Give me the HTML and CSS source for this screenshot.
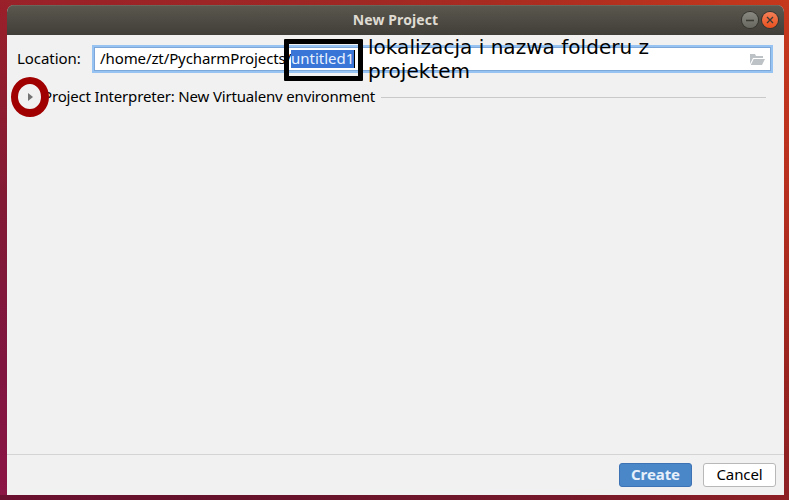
FILE: index.html
```html
<!DOCTYPE html>
<html lang="en">
<head>
<meta charset="utf-8">
<title>New Project</title>
<link rel="stylesheet" href="styles.css">
</head>
<body>
<main class="window">
  <header class="titlebar">
    <h1 class="title">New Project</h1>
    <div class="controls">
      <button class="control" aria-label="Minimize"><svg viewBox="0 0 16 16"><path d="M4 8.5h8" /></svg></button>
      <button class="control close" aria-label="Close"><svg viewBox="0 0 16 16"><path d="M5 5l6 6M11 5l-6 6" /></svg></button>
    </div>
  </header>
  <section class="content">
    <div class="location">
      <span class="label">Location:</span>
      <div class="field">
        <span class="path">/home/zt/PycharmProjects/</span><span class="selected">untitled1</span>
        <svg class="folder" viewBox="0 0 15 11"><path d="M0 0h5l1 2h7v2H3L0 10z" /><path d="M3.7 5H15l-3 6H.8z" /></svg>
      </div>
    </div>
    <div class="interpreter">
      <svg class="arrow" viewBox="0 0 5 8"><path d="M0 0l5 4-5 4z" /></svg>
      <span class="heading">Project Interpreter: New Virtualenv environment</span>
      <span class="rule"></span>
    </div>
  </section>
  <footer class="footer">
    <button class="button primary">Create</button>
    <button class="button">Cancel</button>
  </footer>
</main>
<div class="mark-box"></div>
<div class="mark-ring"></div>
<p class="note">lokalizacja i nazwa folderu z<br>projektem</p>
</body>
</html>
```
FILE: styles.css
```css
* { box-sizing: border-box; }
body {
  margin: 0;
  width: 789px;
  height: 500px;
  overflow: hidden;
  padding: 5px 5px 5px 7px;
  font: 15px/20px "Noto Sans", "Open Sans", sans-serif;
  color: #000;
  background:
    linear-gradient(90deg, #6b1030, #65122b 30%, #75182a 70%, #8d2025) 0 100% / 100% 5px no-repeat,
    linear-gradient(#9a202a, #821a35 40%, #801540 75%, #8c1545) 0 0 / 7px 100% no-repeat,
    linear-gradient(#c5391d, #b9301e 35%, #98231f 75%, #8b2025) 100% 0 / 5px 100% no-repeat,
    linear-gradient(90deg, #992129, #9f2824 45%, #ad2d20 70%, #c6381c);
}
.window {
  width: 777px;
  height: 490px;
  display: flex;
  flex-direction: column;
  background: #f1f1f1;
  border-radius: 7px 7px 0 0;
  overflow: hidden;
}
.titlebar {
  height: 30px;
  display: grid;
  grid-template-columns: 44px 1fr 44px;
  align-items: center;
  background: linear-gradient(#5b584f, #403e38);
  box-shadow: inset 0 1px #69665c;
}
.title {
  grid-column: 2;
  margin: 0;
  text-align: center;
  font-size: 14px;
  font-weight: 700;
  line-height: 20px;
  letter-spacing: .1px;
  color: #dfdbd2;
}
.controls { display: flex; gap: 4px; margin-left: 2px; }
.control {
  width: 16px;
  height: 16px;
  padding: 0;
  border: 0;
  border-radius: 50%;
  background: linear-gradient(#8a8981, #68675f);
  box-shadow: 0 0 0 1px #35342f;
}
.control.close { background: linear-gradient(#f58057, #e9501e); }
.control svg { display: block; width: 16px; height: 16px; fill: none; stroke: #3b3933; stroke-width: 1.3; }
.content { flex: 1; padding: 10px 11px 0 10px; }
.location { display: flex; align-items: center; height: 28px; }
.label { width: 75px; padding-bottom: 2px; letter-spacing: -.05px; white-space: nowrap; }
.field {
  flex: 1;
  height: 28px;
  display: flex;
  align-items: center;
  padding: 0 6px 0 5px;
  background: #fff;
  border: 2px solid #97c3f3;
  box-shadow: inset 0 0 0 1px #7ca7d8;
}
.path { width: 192px; padding: 0 0 2px 1px; letter-spacing: -.1px; white-space: nowrap; }
.selected {
  width: 64px;
  height: 18px;
  line-height: 16px;
  background: #3875d6;
  color: #e9f1ff;
  border-right: 1px solid #000;
  white-space: nowrap;
}
.folder { width: 15px; height: 11px; margin-left: auto; fill: #bdc2c6; }
.interpreter { display: flex; align-items: center; height: 20px; margin-top: 14px; padding: 0 7px 0 11px; }
.arrow { width: 5px; height: 8px; fill: #737373; }
.heading { width: 332px; margin: 0 6px 0 10px; padding-bottom: 2px; letter-spacing: -.17px; white-space: nowrap; }
.rule { flex: 1; height: 1px; background: #c9c9c9; }
.footer {
  height: 41px;
  display: flex;
  justify-content: flex-end;
  align-items: flex-start;
  gap: 11px;
  padding: 8px 8px 0 0;
  border-top: 1px solid #d4d4d4;
}
.button {
  width: 73px;
  height: 24px;
  padding: 0 0 2px;
  border: 1px solid #b8b8b8;
  border-radius: 3px;
  background: #fff;
  color: #000;
  font: 15px/20px "Noto Sans", "Open Sans", sans-serif;
  letter-spacing: -.1px;
}
.primary { background: #4a87c8; border-color: #3d73b5; color: #e6effa; font-weight: 700; }
.mark-box { position: absolute; left: 284px; top: 39px; width: 79px; height: 42px; border: 5px solid #000; border-radius: 1px; }
.mark-ring { position: absolute; left: 11px; top: 77px; width: 38px; height: 40px; border: 7px solid #a00000; border-right-width: 8px; border-bottom-width: 8px; border-radius: 50%; }
.note {
  position: absolute;
  left: 368px;
  top: 35px;
  margin: 0;
  font: 20px/24px "DejaVu Sans", sans-serif;
  letter-spacing: .03px;
  white-space: nowrap;
}
```
